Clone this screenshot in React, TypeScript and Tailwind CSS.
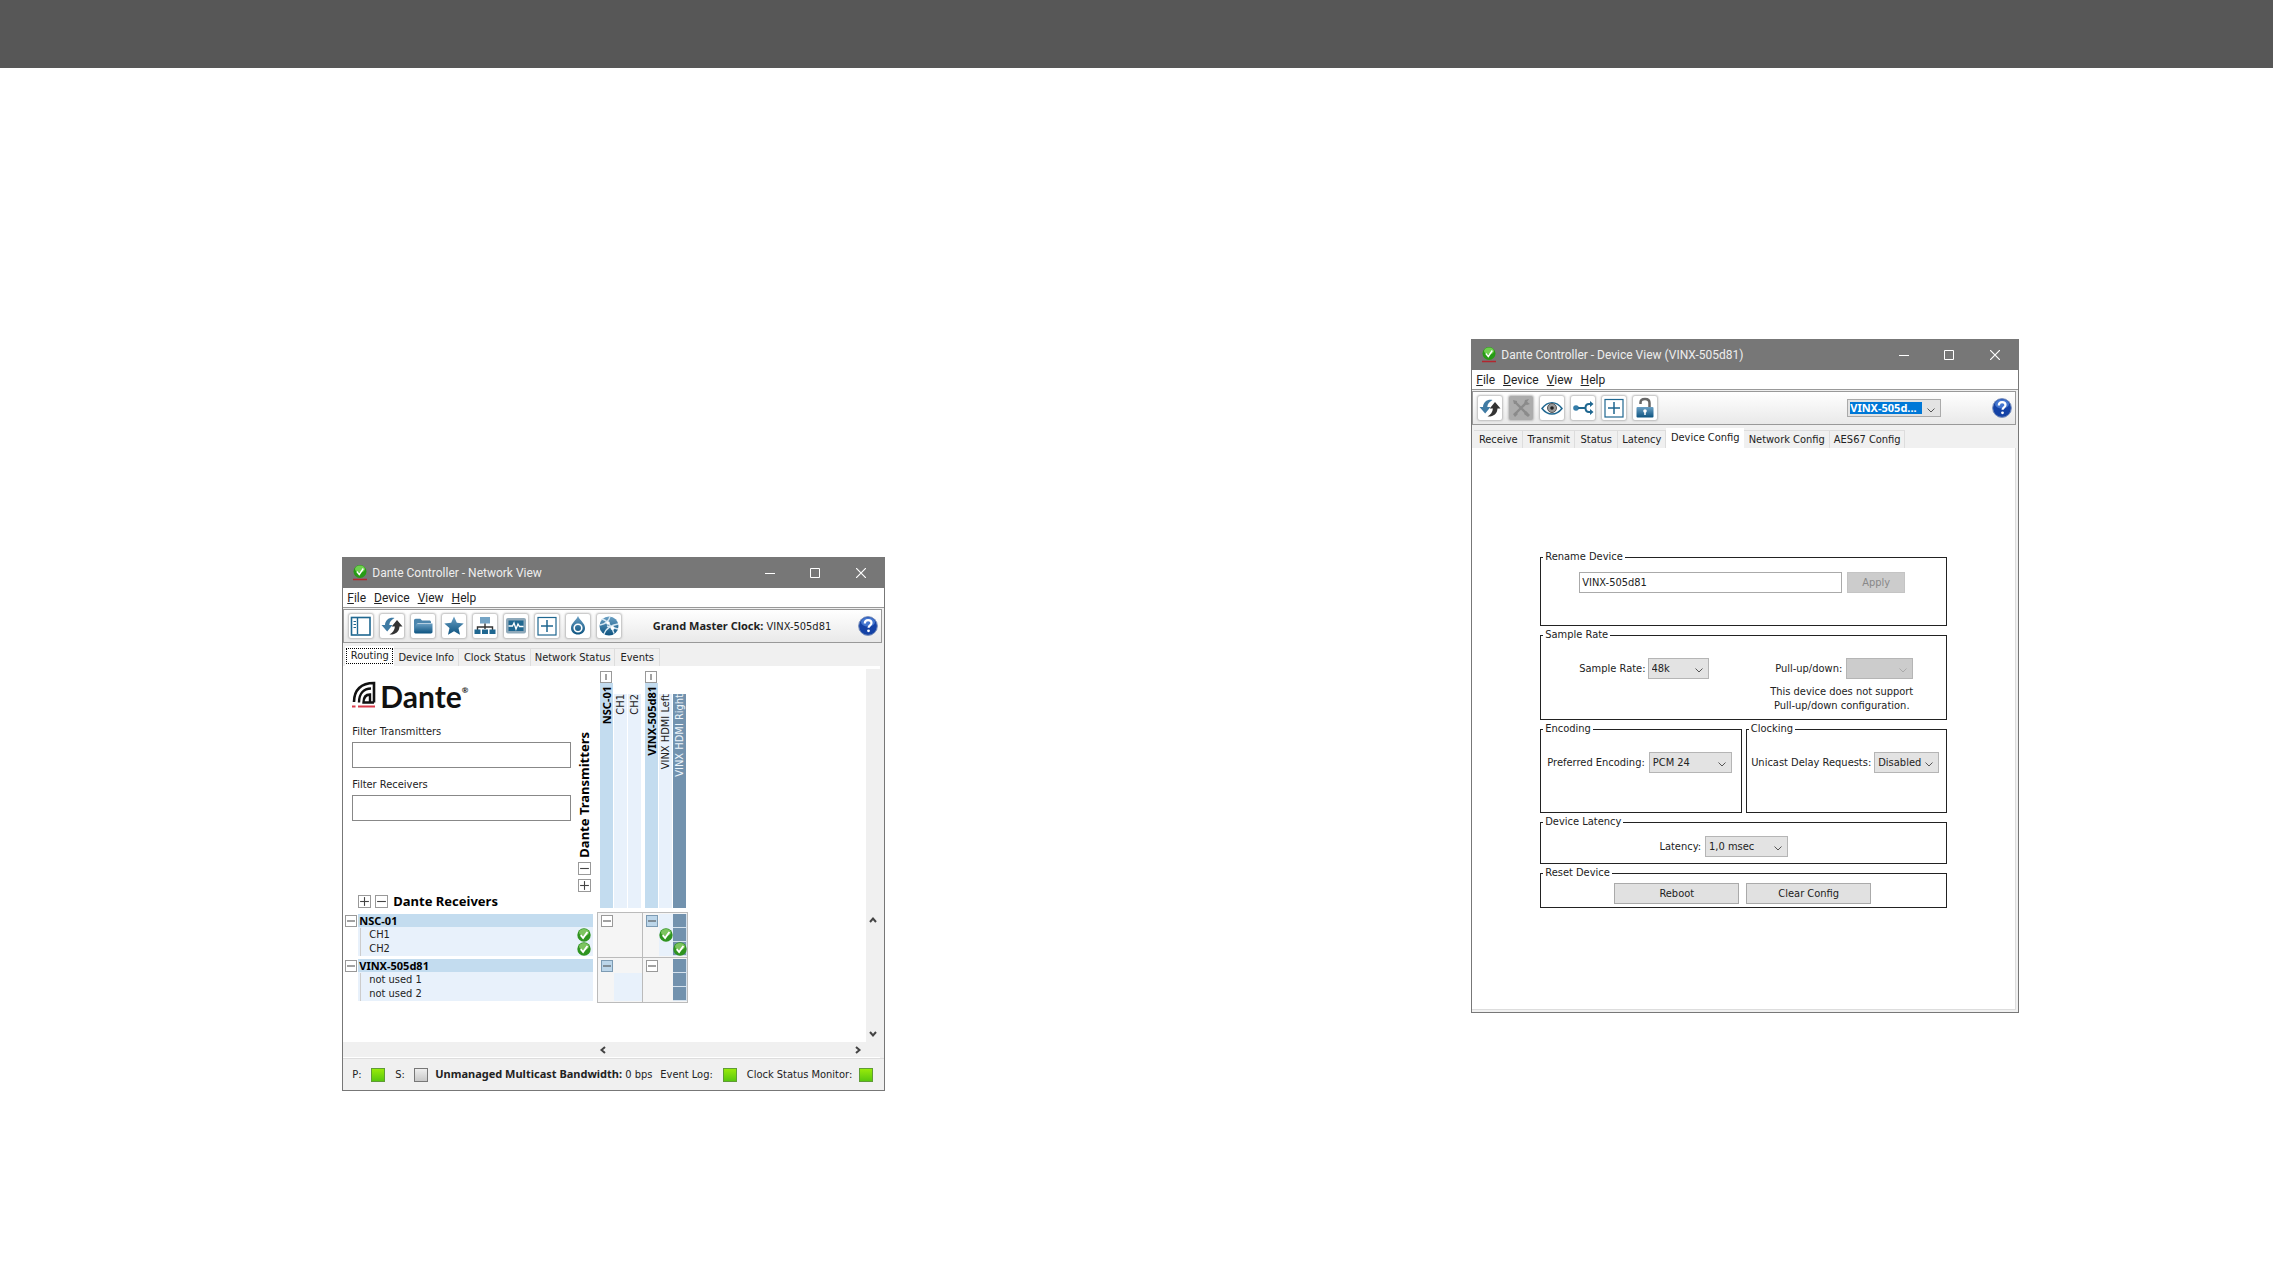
import type { ReactNode } from "react";
import { clsx } from "clsx";

const BLUE = "#1f6790";

function Svg({ children }: { children: ReactNode }) {
  return (
    <svg viewBox="0 0 24 24" className="h-6 w-6" fill="none" aria-hidden="true">
      <defs>
        <linearGradient id="steel" x1="0" y1="0" x2="0" y2="1">
          <stop offset="0" stopColor="#6ba0c4" />
          <stop offset="1" stopColor="#0c5380" />
        </linearGradient>
      </defs>
      {children}
    </svg>
  );
}

const icons = {
  panel: (
    <Svg>
      <rect x="2.5" y="3.5" width="18.500" height="17.500" stroke={BLUE} strokeWidth="1.6" />
      <path d="M8.5 4v16" stroke={BLUE} strokeWidth="1.4" />
      <path d="M4.5 7.5H7M4.5 10.5H7M4.5 13.5H7" stroke={BLUE} />
    </Svg>
  ),
  refresh: (
    <Svg>
      <path d="M14.500 4C9 3.200 5.400 6 5 11H1.500l5.700 6.500L12.500 11H9.300c.2-3.200 2-5.200 5.200-7z" fill="#3f7ba4" />
      <path d="M9.500 20.500c6 .3 9.700-2.500 10-8h3L17 6l-5.300 6.500h3.200c-.2 3.500-2.300 6.200-5.400 8z" fill="#333" />
    </Svg>
  ),
  folder: (
    <Svg>
      <path d="M3 6.500c0-1 .7-1.700 1.700-1.700h4.600l1.700 1.700h7.300c1 0 1.700.7 1.700 1.700V9H6.500L4.500 18H3z" fill="#4c86ad" />
      <path d="M6 9.500h15.500v8.300c0 1-.7 1.700-1.700 1.700H4.500c-.8 0-1.300-.5-1.300-1.200L5 10.300c.1-.5.500-.8 1-.8z" fill="url(#steel)" />
    </Svg>
  ),
  star: (
    <Svg>
      <path d="M12 2.500l2.800 6.300 6.900.7-5.200 4.600 1.500 6.700-6-3.500-6 3.500 1.500-6.700L2.300 9.500l6.900-.7z" fill="url(#steel)" />
    </Svg>
  ),
  tree: (
    <Svg>
      <rect x="7" y="3" width="10" height="6.500" fill="#75a4c5" />
      <path d="M12 9.500V15M4.500 16v-3h15v3" stroke="#333" strokeWidth="1.400" />
      <path d="M1.500 15.500h6V20h-6zM9 15.500h6V20H9zM16.500 15.500h6V20h-6z" fill={BLUE} />
    </Svg>
  ),
  monitor: (
    <Svg>
      <rect x="2" y="4" width="20" height="15.500" rx="2" fill="#8fa9ba" />
      <rect x="4.500" y="6.500" width="15" height="10.500" fill={BLUE} />
      <path d="M4.500 12h4l1.500-3 2 6 2-5 1.500 2.500h4" stroke="#fff" strokeWidth="1.300" />
    </Svg>
  ),
  plus: (
    <Svg>
      <rect x="3" y="3.500" width="18" height="17.500" stroke={BLUE} strokeWidth="1.200" />
      <path d="M12 6v12M6 12h12" stroke={BLUE} strokeWidth="1.500" />
    </Svg>
  ),
  drop: (
    <Svg>
      <path d="M12 2c1.500 4.300 7 7 7 12 0 4-3 6.500-7 6.500S5 18 5 14c0-5 5.500-7.700 7-12z" fill="url(#steel)" />
      <circle cx="12" cy="14" r="3.800" stroke="#fff" strokeWidth="1.600" />
    </Svg>
  ),
  globe: (
    <Svg>
      <circle cx="12" cy="12" r="9.500" fill="url(#steel)" />
      <path d="M3 11c5-1 9-4 10-8.500M5 5c4 1 10 6 12 14.500M7 20c2-5 7-9 14-10M10 12l11 3" stroke="#d7e8f3" strokeWidth="1.300" />
      <circle cx="11" cy="9" r="1.800" fill="#fff" />
      <circle cx="15.500" cy="14" r="2" fill="#fff" />
    </Svg>
  ),
  tools: (
    <Svg>
      <path d="M6 6l12 12M18 6L6 18" stroke="#8b8b8b" strokeWidth="2.400" />
      <path d="M4 4l4 1v3H5zM15 8l1-4 4-1-2 3 3 2-3 1zM15 18l2-3 4 4-2 2zM4 18l3-2 2 2-3 3z" fill="#8b8b8b" />
    </Svg>
  ),
  eye: (
    <Svg>
      <path d="M2 12.500C5 8.500 8.300 6.800 12 6.800s7 1.700 10 5.700c-3 3.800-6.300 5.500-10 5.500S5 16.300 2 12.500z" fill="#fff" stroke={BLUE} strokeWidth="1.500" />
      <circle cx="12" cy="12" r="4.500" fill="#999" stroke="#555" />
      <circle cx="12" cy="12" r="1.800" fill="#222" />
    </Svg>
  ),
  route: (
    <Svg>
      <circle cx="5" cy="12" r="2.800" fill="#347da9" />
      <path d="M7 12h7M20 8h-2c-3 0-3.500 1.500-3.500 4s.5 4 3.500 4h2" stroke={BLUE} strokeWidth="2" />
      <path d="M19 5l3.500 3-3.500 3zM19 13l3.500 3-3.500 3z" fill={BLUE} />
    </Svg>
  ),
  lock: (
    <Svg>
      <path d="M7.500 8V6.500c0-2.300 1.800-3.500 4.500-3.500s4.500 1.500 4.500 4v4" stroke="#666" strokeWidth="2.500" />
      <rect x="3.500" y="11" width="17" height="10.500" rx="1" fill="url(#steel)" />
      <circle cx="12" cy="15" r="1.800" fill="#fff" />
      <path d="M12 15v4" stroke="#fff" strokeWidth="1.500" />
    </Svg>
  ),
};

function CheckBall() {
  return (
    <svg viewBox="0 0 14 14" className="h-3.5 w-3.5 shrink-0" role="img" aria-label="Connected">
      <circle cx="7" cy="7" r="6.700" fill="#2f9420" />
      <ellipse cx="7" cy="4.500" rx="5" ry="3.500" fill="#7cc45f" />
      <path d="M3.700 7.200l2.400 2.800 4.300-6" fill="none" stroke="#fff" strokeWidth="1.900" />
    </svg>
  );
}

function HelpButton() {
  return (
    <button type="button" aria-label="Help about this view" className="h-5 w-5 shrink-0">
      <svg viewBox="0 0 20 20" className="h-5 w-5" aria-hidden="true">
        <circle cx="10" cy="10" r="9.400" fill="#1442a6" stroke="#7e93bd" strokeWidth="1" />
        <ellipse cx="10" cy="6" rx="7" ry="4.500" fill="#4476cf" />
        <path d="M6.800 7.500c0-2.200 1.300-3.400 3.300-3.400s3.400 1.200 3.400 2.900c0 2.300-2.900 2.400-2.900 4.800" fill="none" stroke="#fff" strokeWidth="2.200" />
        <circle cx="10.500" cy="14.800" r="1.400" fill="#fff" />
      </svg>
    </button>
  );
}

function DanteLogo() {
  return (
    <div className="flex items-end gap-1" role="img" aria-label="Dante">
      <svg viewBox="0 0 24 27" className="h-[27px] w-6" aria-hidden="true">
        <path d="M2 21C2 9 9 2 22 2v19.500" fill="none" stroke="#111" strokeWidth="2.600" />
        <path d="M7 21.500C7 12 12 7.500 19 7.500" fill="none" stroke="#111" strokeWidth="2.400" />
        <path d="M22 21.500H11.500c0-5 2.500-8 6.500-8v7" fill="none" stroke="#111" strokeWidth="2.400" />
        <path d="M0 25.500h3.500M6 25.500h17" stroke="#d93a4a" strokeWidth="2" />
      </svg>
      <span className="flex font-['Lato','Liberation_Sans',sans-serif] text-[30px] leading-6 font-bold text-[#111]">
        Dante<sup className="top-0 text-[8px] leading-3">®</sup>
      </span>
    </div>
  );
}

function WindowFrame({ title, className, children }: { title: string; className: string; children: ReactNode }) {
  return (
    <section
      aria-label={title}
      className={clsx("flex flex-col border border-[#777] bg-[#f0f0f0] font-['DejaVu_Sans_Condensed','DejaVu_Sans',sans-serif] text-[11px] leading-[14px] text-[#222]", className)}
    >
      <header className="flex h-[30px] shrink-0 items-center bg-[#777] pl-[9px] font-['Roboto','Open_Sans',sans-serif] text-xs text-[#eee]">
        <svg viewBox="0 0 16 18" className="mr-1 h-[18px] w-4" aria-hidden="true">
          <circle cx="8" cy="7.500" r="6.500" fill="#279b15" />
          <ellipse cx="8" cy="5" rx="5" ry="3.500" fill="#6fd04f" />
          <path d="M4.800 7.500l2.500 3 4-6" fill="none" stroke="#fff" strokeWidth="1.400" />
          <path d="M1 15.500h14" stroke="#b3262e" strokeWidth="1.500" />
        </svg>
        <h2 className="flex-1">{title}</h2>
        <button type="button" aria-label="Minimize" className="flex w-[45px] justify-center">
          <svg viewBox="0 0 10 10" className="h-2.5 w-2.5" stroke="#fff"><path d="M0 5.500h10" /></svg>
        </button>
        <button type="button" aria-label="Maximize" className="flex w-[45px] justify-center">
          <svg viewBox="0 0 10 10" className="h-2.5 w-2.5" stroke="#fff" fill="none"><path d="M.5.5h9v9h-9z" /></svg>
        </button>
        <button type="button" aria-label="Close" className="flex w-[47px] justify-center">
          <svg viewBox="0 0 10 10" className="h-2.5 w-2.5" stroke="#fff" strokeWidth="1.200"><path d="M0 0l10 10M10 0L0 10" /></svg>
        </button>
      </header>
      <nav className="flex h-5 shrink-0 items-center gap-2 border-b border-[#999] bg-white pl-1 font-['Roboto','Open_Sans',sans-serif] text-xs text-[#222]">
        {["File", "Device", "View", "Help"].map((item) => (
          <button key={item} type="button" className="first-letter:underline">
            {item}
          </button>
        ))}
      </nav>
      {children}
    </section>
  );
}

function Toolbar({ tools, children }: { tools: { label: string; icon: ReactNode; disabled?: boolean }[]; children: ReactNode }) {
  return (
    <div className="mt-px mr-0.5 flex h-[34px] shrink-0 items-center border border-[#999] bg-linear-to-b from-white to-[#e9e9e9] pr-[3px] pl-[5px]">
      <div className="flex gap-[7px]">
        {tools.map((tool) => (
          <button
            key={tool.label}
            type="button"
            aria-label={tool.label}
            disabled={tool.disabled}
            className={clsx(
              "flex h-6 w-6 items-center justify-center rounded-xs shadow-[0_0_2px_1px_#bbb]",
              tool.disabled ? "bg-[#acacac]" : "bg-white",
            )}
          >
            {tool.icon}
          </button>
        ))}
      </div>
      {children}
      <HelpButton />
    </div>
  );
}

function Tabs({ tabs, active, focused }: { tabs: { label: string; width: string }[]; active: string; focused?: boolean }) {
  return (
    <div role="tablist" className="mt-[3px] flex h-5 shrink-0 items-end px-0.5">
      {tabs.map(({ label, width }) => (
        <button
          key={label}
          type="button"
          role="tab"
          aria-selected={label === active}
          className={clsx(
            "whitespace-nowrap",
            width,
            label === active ? "h-5 bg-white p-px pb-0.5" : "h-[18px] border-t border-r border-[#ddd]",
          )}
        >
          <span className={clsx("block", label === active && focused && "border border-dotted border-black")}>{label}</span>
        </button>
      ))}
    </div>
  );
}

function Toggle({ open, label, tinted, vertical, large }: { open?: boolean; label: string; tinted?: boolean; vertical?: boolean; large?: boolean }) {
  return (
    <button
      type="button"
      aria-label={label}
      className={clsx(
        "shrink-0 border",
        large ? "h-[13px] w-[13px]" : "h-3 w-3",
        tinted ? "border-[#7d9bb3] bg-[#bcd6ea]" : "border-[#999] bg-white",
      )}
    >
      <svg viewBox="0 0 10 10" className="block h-full w-full" stroke="#444">
        {vertical ? <path d="M5 2v6" /> : <path d="M1 5h8" />}
        {open && <path d="M5 1v8" />}
      </svg>
    </button>
  );
}

function ColumnLabel({ text, kind }: { text: string; kind: "device" | "channel" | "selected" }) {
  return (
    <div
      className={clsx(
        "flex w-[13px] flex-col items-center",
        kind === "device" && "h-[225px] bg-[#c3dcef] pt-[3px] font-['Noto_Sans',sans-serif] font-bold text-black",
        kind === "channel" && "h-[214px] bg-[#e8f1fb]",
        kind === "selected" && "h-[214px] bg-[#7292ae] text-[#eef5fb]",
      )}
    >
      <span className="rotate-180 leading-[13px] whitespace-nowrap [writing-mode:vertical-rl]">{text}</span>
    </div>
  );
}

function Receiver({ name, channels, connected }: { name: string; channels: string[]; connected?: boolean }) {
  return (
    <div className="h-[45px] pt-0.5 pl-0.5">
      <div className="flex h-[13px] items-center gap-px">
        <Toggle label={`Collapse ${name}`} />
        <span className="flex h-[13px] flex-1 items-center bg-[#c3dcef] pl-px font-['Noto_Sans',sans-serif] font-bold text-black">{name}</span>
      </div>
      <ul className="ml-[13px] bg-[#e8f1fb] pt-px">
        {channels.map((channel) => (
          <li key={channel} className="flex h-3.5 items-center justify-between pr-0.5">
            <span className="mr-1 ml-0.5 h-3.5 w-[5px] border-l border-[#ccc]" />
            <span className="flex-1">{channel}</span>
            {connected && <CheckBall />}
          </li>
        ))}
      </ul>
    </div>
  );
}

// cell kinds: "t" toggle, "T" tinted toggle, "b" pale blue, "s" selected, "c" connected, "x" connected on selected
const matrix = [
  [["t..", "...", "..."], ["Tbs", ".cs", ".bx"]],
  [["T..", ".bb", ".bb"], ["t.s", "..s", "..s"]],
];

function Crosspoints() {
  return (
    <div className="h-[91px] w-[91px] border-t border-l border-[#bbb]">
      {matrix.map((groups, y) => (
        <div key={y} className="flex">
          {groups.map((rows, x) => (
            <div key={x} className="h-[45px] w-[45px] border-r border-b border-[#bbb] bg-[#f5f5f5] pt-px pl-0.5">
              {rows.map((row, r) => (
                <div key={r} className="flex">
                  {row.split("").map((cell, c) => (
                    <span
                      key={c}
                      className={clsx(
                        "flex h-3.5 w-3.5 items-center justify-center border-r border-b",
                        cell === "s" || cell === "x" ? "border-[#d5e2ee] bg-[#7292ae]" : "border-transparent",
                        (cell === "b" || cell === "c") && "bg-[#e8f1fb]",
                      )}
                    >
                      {(cell === "t" || cell === "T") && <Toggle label="Collapse group" tinted={cell === "T"} />}
                      {(cell === "c" || cell === "x") && <CheckBall />}
                    </span>
                  ))}
                </div>
              ))}
            </div>
          ))}
        </div>
      ))}
    </div>
  );
}

function Arrow({ d, label }: { d: string; label: string }) {
  return (
    <button type="button" aria-label={label}>
      <svg viewBox="0 0 8 8" className="h-2 w-2" fill="none" stroke="#444" strokeWidth="2">
        <path d={d} />
      </svg>
    </button>
  );
}

function Led({ on }: { on?: boolean }) {
  return (
    <span
      className={clsx(
        "h-3.5 w-3.5 shrink-0 border bg-linear-to-b",
        on ? "border-[#5f9c35] from-[#97ea0a] to-[#58c80e]" : "border-[#777] from-[#eee] to-[#c8c8c8]",
      )}
    />
  );
}

function FilterField({ id, label }: { id: string; label: string }) {
  return (
    <div className="flex flex-col gap-[3px]">
      <label htmlFor={id}>{label}</label>
      <input id={id} type="text" className="h-[26px] w-[219px] border border-[#888] bg-white px-1" />
    </div>
  );
}

function NetworkView() {
  return (
    <WindowFrame title="Dante Controller - Network View" className="mt-[218px] w-[543px]">
      <Toolbar
        tools={[
          { label: "Toggle panel", icon: icons.panel },
          { label: "Refresh", icon: icons.refresh },
          { label: "Open", icon: icons.folder },
          { label: "Favourites", icon: icons.star },
          { label: "Topology", icon: icons.tree },
          { label: "Monitor", icon: icons.monitor },
          { label: "New window", icon: icons.plus },
          { label: "Clock", icon: icons.drop },
          { label: "Domains", icon: icons.globe },
        ]}
      >
        <p className="flex-1 pr-[27px] text-right">
          <strong className="font-['Noto_Sans',sans-serif]">Grand Master Clock:</strong> VINX-505d81
        </p>
      </Toolbar>
      <Tabs
        active="Routing"
        focused
        tabs={[
          { label: "Routing", width: "w-[49px]" },
          { label: "Device Info", width: "w-[65px]" },
          { label: "Clock Status", width: "w-[72px]" },
          { label: "Network Status", width: "w-[84px]" },
          { label: "Events", width: "w-[45px]" },
        ]}
      />
      <div className="mr-1 bg-white">
        <div className="flex h-[246px]">
          <div className="flex w-[233px] flex-col pt-[15px] pl-[9px]">
            <DanteLogo />
            <div className="mt-[17px] flex flex-col gap-2.5">
              <FilterField id="filter-tx" label="Filter Transmitters" />
              <FilterField id="filter-rx" label="Filter Receivers" />
            </div>
            <div className="mt-auto mb-1 ml-1.5 flex items-center gap-1">
              <Toggle large open label="Expand all receivers" />
              <Toggle large label="Collapse all receivers" />
              <h3 className="ml-px font-['Noto_Sans',sans-serif] text-[13px] font-bold text-black">Dante Receivers</h3>
            </div>
          </div>
          <div className="flex w-[21px] flex-col items-center justify-end gap-1 pr-[5px] pb-5">
            <h3 className="rotate-180 font-['Noto_Sans',sans-serif] text-[13px] font-bold whitespace-nowrap text-black [writing-mode:vertical-rl]">
              Dante Transmitters
            </h3>
            <Toggle large label="Collapse all transmitters" />
            <Toggle large open label="Expand all transmitters" />
          </div>
          <div className="flex flex-1 gap-1 pb-1 pl-[3px]">
            <div className="flex items-end gap-px">
              <div className="flex flex-col">
                <Toggle vertical label="Collapse NSC-01" />
                <ColumnLabel text="NSC-01" kind="device" />
              </div>
              <ColumnLabel text="CH1" kind="channel" />
              <ColumnLabel text="CH2" kind="channel" />
            </div>
            <div className="flex items-end gap-px">
              <div className="flex flex-col">
                <Toggle vertical label="Collapse VINX-505d81" />
                <ColumnLabel text="VINX-505d81" kind="device" />
              </div>
              <ColumnLabel text="VINX HDMI Left" kind="channel" />
              <ColumnLabel text="VINX HDMI Right" kind="selected" />
            </div>
          </div>
          <div className="mt-[3px] w-3.5 bg-[#f0f0f0]" />
        </div>
        <div className="flex h-[130px]">
          <div className="w-[250px]">
            <Receiver name="NSC-01" channels={["CH1", "CH2"]} connected />
            <Receiver name="VINX-505d81" channels={["not used 1", "not used 2"]} />
          </div>
          <div className="flex-1 pl-1">
            <Crosspoints />
          </div>
          <div className="flex w-3.5 flex-col items-center justify-between bg-[#f0f0f0] py-1">
            <Arrow label="Scroll up" d="M1 6l3-3.500L7 6" />
            <Arrow label="Scroll down" d="M1 2l3 3.500L7 2" />
          </div>
        </div>
        <div className="flex h-4 items-center justify-between border-b border-white bg-[#f0f0f0] pr-[18px] pl-[256px]">
          <Arrow label="Scroll left" d="M6 1L2.500 4 6 7" />
          <Arrow label="Scroll right" d="M2 1l3.500 3L2 7" />
        </div>
      </div>
      <footer className="flex h-8 items-center border-t border-[#ddd] pl-[9px] whitespace-nowrap">
        <span className="w-[19px]">P:</span>
        <Led on />
        <span className="ml-2.5 w-[19px]">S:</span>
        <Led />
        <p className="ml-[7px] flex-1">
          <strong className="font-['Noto_Sans',sans-serif]">Unmanaged Multicast Bandwidth:</strong> 0 bps
        </p>
        <span className="mr-2.5">Event Log:</span>
        <Led on />
        <span className="mr-[7px] ml-2.5">Clock Status Monitor:</span>
        <Led on />
        <span className="w-[11px]" />
      </footer>
    </WindowFrame>
  );
}

function Select({ id, value, width, disabled }: { id: string; value: string; width: string; disabled?: boolean }) {
  return (
    <span className={clsx("relative inline-flex h-[21px] border border-[#b5b5b5]", disabled ? "bg-[#ccc]" : "bg-[#e3e3e3]", width)}>
      <select id={id} disabled={disabled} defaultValue={value} className="w-full appearance-none bg-transparent pl-[3px]">
        <option>{value}</option>
      </select>
      <svg viewBox="0 0 8 5" className={clsx("pointer-events-none absolute top-[9px] right-[5px] h-[5px] w-2", disabled ? "stroke-[#aaa]" : "stroke-[#555]")} fill="none">
        <path d="M.5.5L4 4 7.500.5" />
      </svg>
    </span>
  );
}

function Group({ title, className, children }: { title: string; className: string; children: ReactNode }) {
  return (
    <fieldset className={clsx("min-w-0 border border-[#222]", className)}>
      <legend className="ml-0.5 px-0.5">{title}</legend>
      {children}
    </fieldset>
  );
}

function DeviceView() {
  return (
    <WindowFrame title="Dante Controller - Device View (VINX-505d81)" className="w-[548px]">
      <Toolbar
        tools={[
          { label: "Refresh", icon: icons.refresh },
          { label: "Tools", icon: icons.tools, disabled: true },
          { label: "Identify", icon: icons.eye },
          { label: "Multicast", icon: icons.route },
          { label: "New window", icon: icons.plus },
          { label: "Device lock", icon: icons.lock },
        ]}
      >
        <div className="flex flex-1 justify-end pr-[51px]">
          <span className="relative flex h-[18px] w-[94px] items-center border border-[#aaa] bg-[#e3e3e3] pl-0.5">
            <select
              aria-label="Device"
              defaultValue="VINX-505d..."
              className="h-3 w-[72px] appearance-none bg-[#0078d7] font-['Noto_Sans',sans-serif] leading-3 font-bold text-white"
            >
              <option>VINX-505d...</option>
            </select>
            <svg viewBox="0 0 8 5" className="pointer-events-none absolute top-2 right-[5px] h-[5px] w-2" fill="none" stroke="#555">
              <path d="M.5.5L4 4 7.500.5" />
            </svg>
          </span>
        </div>
      </Toolbar>
      <Tabs
        active="Device Config"
        tabs={[
          { label: "Receive", width: "w-[49px]" },
          { label: "Transmit", width: "w-[52px]" },
          { label: "Status", width: "w-[43px]" },
          { label: "Latency", width: "w-12" },
          { label: "Device Config", width: "w-[78px]" },
          { label: "Network Config", width: "w-[86px]" },
          { label: "AES67 Config", width: "w-[75px]" },
        ]}
      />
      <div className="mr-0.5 mb-0.5 border-r border-b border-[#ddd] bg-white px-[68px] pt-[102px] pb-[101px]">
        <div className="flex flex-col gap-0.5">
          <Group title="Rename Device" className="h-[76px]">
            <div className="flex gap-[5px] pt-2 pl-[38px]">
              <input aria-label="Device name" defaultValue="VINX-505d81" className="h-[21px] w-[263px] border border-[#aaa] bg-white px-0.5" />
              <button type="button" disabled className="h-[21px] w-[58px] border border-[#c4c4c4] bg-[#ccc] text-[#888]">
                Apply
              </button>
            </div>
          </Group>
          <Group title="Sample Rate" className="h-[92px]">
            <div className="flex justify-between pt-4 pr-[33px] pl-[38px]">
              <div className="flex h-[21px] items-center gap-0.5">
                <label htmlFor="sample-rate">Sample Rate:</label>
                <Select id="sample-rate" value="48k" width="w-[61px]" />
              </div>
              <div className="flex flex-col items-end">
                <div className="flex items-center gap-1">
                  <label htmlFor="pull">Pull-up/down:</label>
                  <Select id="pull" value="" width="w-[67px]" disabled />
                </div>
                <p className="mt-1.5 text-center">
                  This device does not support
                  <br />
                  Pull-up/down configuration.
                </p>
              </div>
            </div>
          </Group>
          <div className="grid grid-cols-2 gap-1">
            <Group title="Encoding" className="h-[91px]">
              <div className="flex items-center justify-end gap-1 pt-4 pr-[9px]">
                <label htmlFor="encoding">Preferred Encoding:</label>
                <Select id="encoding" value="PCM 24" width="w-[83px]" />
              </div>
            </Group>
            <Group title="Clocking" className="h-[91px]">
              <div className="flex items-center justify-end gap-[3px] pt-4 pr-[7px]">
                <label htmlFor="unicast">Unicast Delay Requests:</label>
                <Select id="unicast" value="Disabled" width="w-[65px]" />
              </div>
            </Group>
          </div>
          <Group title="Device Latency" className="h-[49px]">
            <div className="flex items-center justify-center gap-1 pt-[7px] pr-10">
              <label htmlFor="latency">Latency:</label>
              <Select id="latency" value="1,0 msec" width="w-[83px]" />
            </div>
          </Group>
          <Group title="Reset Device" className="h-[42px]">
            <div className="flex justify-center gap-[7px] pt-[3px] pr-0.5">
              <button type="button" className="h-[21px] w-[125px] border border-[#aaa] bg-[#e1e1e1]">Reboot</button>
              <button type="button" className="h-[21px] w-[125px] border border-[#aaa] bg-[#e1e1e1]">Clear Config</button>
            </div>
          </Group>
        </div>
      </div>
    </WindowFrame>
  );
}

export default function App() {
  return (
    <div className="min-h-screen bg-white">
      <div className="h-[68px] bg-[#575757]" />
      <main className="grid grid-cols-2 items-start justify-items-center gap-[76px] pt-[271px] pl-[86px]">
        <NetworkView />
        <DeviceView />
      </main>
    </div>
  );
}
